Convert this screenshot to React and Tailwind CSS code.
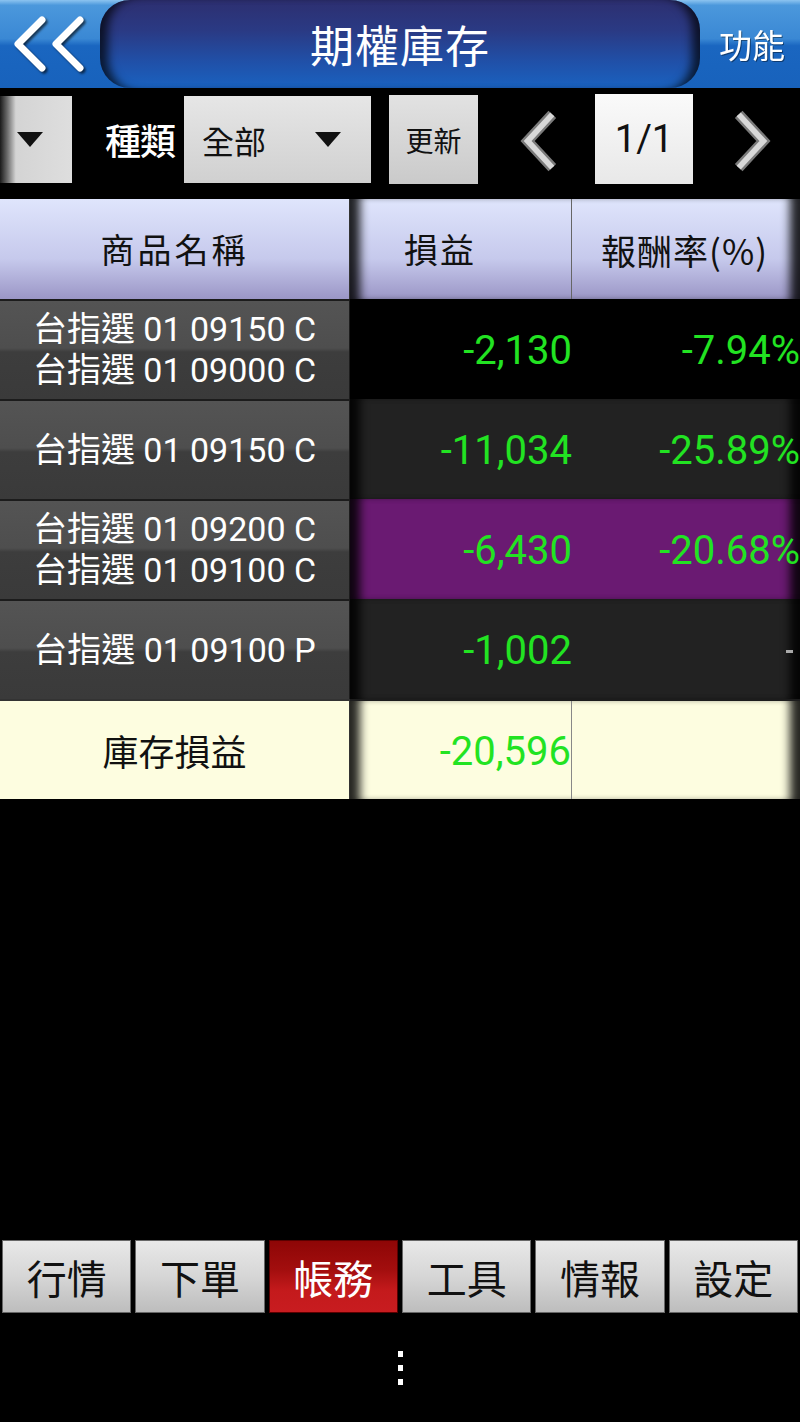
import React from 'react'

const cjk = { fontFamily: '"Noto Sans CJK TC", "Noto Sans CJK SC", sans-serif' }
const num = { fontFamily: 'Roboto, "Noto Sans CJK TC", sans-serif' }

const rows = [
  { names: ['台指選 01 09150 C', '台指選 01 09000 C'], pl: '-2,130', rate: '-7.94%', bg: 'bg-black' },
  { names: ['台指選 01 09150 C'], pl: '-11,034', rate: '-25.89%', bg: 'bg-[#222222]' },
  { names: ['台指選 01 09200 C', '台指選 01 09100 C'], pl: '-6,430', rate: '-20.68%', bg: 'bg-[#6a1a72]' },
  { names: ['台指選 01 09100 P'], pl: '-1,002', rate: '-', bg: 'bg-[#222222]', dash: true },
]

const tabs = ['行情', '下單', '帳務', '工具', '情報', '設定']

const Chevron = ({ dir, className }) => (
  <svg viewBox="0 0 40 64" className={className}>
    <polyline
      points={dir === 'left' ? '34,4 8,32 34,60' : '6,4 32,32 6,60'}
      fill="none"
      stroke="#7a7a7a"
      strokeWidth="11"
      strokeLinejoin="miter"
    />
    <polyline
      points={dir === 'left' ? '34,4 8,32 34,60' : '6,4 32,32 6,60'}
      fill="none"
      stroke="#d8d8d8"
      strokeWidth="6"
      strokeLinejoin="miter"
    />
  </svg>
)

const Caret = () => (
  <svg viewBox="0 0 26 15" className="w-[26px] h-[15px]">
    <polygon points="0,0 26,0 13,15" fill="#111" />
  </svg>
)

const App = () => {
  return (
    <div className="w-[800px] h-[1422px] bg-black flex flex-col overflow-hidden" style={cjk}>
      {/* Title bar */}
      <div className="h-[88px] flex bg-[linear-gradient(#8cc4f0_0%,#4b98dc_6%,#3a88d4_44%,#1a66c0_52%,#1862bc_100%)]">
        <div className="w-[100px] flex items-center pl-[10px]">
          <svg viewBox="0 0 80 60" className="w-[80px] h-[60px] drop-shadow-[2px_2px_1px_rgba(0,0,0,0.6)]">
            <polyline points="32,6 8,30 32,54" fill="none" stroke="#fff" strokeWidth="7" strokeLinecap="round" strokeLinejoin="round" />
            <polyline points="70,6 46,30 70,54" fill="none" stroke="#fff" strokeWidth="7" strokeLinecap="round" strokeLinejoin="round" />
          </svg>
        </div>
        <div className="flex-1 rounded-[30px] flex items-center justify-center bg-[linear-gradient(#2d2f70_0%,#2a3a84_35%,#2050a8_70%,#1a62c0_100%)] shadow-[inset_14px_0_10px_-6px_rgba(0,0,0,0.7),inset_-14px_0_10px_-6px_rgba(0,0,0,0.7)]">
          <span className="text-white text-[44px] leading-none tracking-[1px]">期權庫存</span>
        </div>
        <div className="w-[100px] flex items-center justify-center pl-[4px]">
          <span className="text-white text-[33px] leading-none drop-shadow-[1px_1px_0_rgba(0,0,0,0.4)]">功能</span>
        </div>
      </div>

      {/* Toolbar */}
      <div className="h-[111px] flex items-start pt-[7px]">
        <div className="w-[72px] h-[87px] mt-[1px] flex items-center pl-[17px] bg-[linear-gradient(90deg,#1a1a1a_0%,#6a6a6a_10%,#d4d4d4_22%,#dedede_100%)]">
          <Caret />
        </div>
        <span className="ml-[33px] mt-[26px] text-white text-[36px] font-medium leading-none tracking-[-1px]">種類</span>
        <div className="ml-[9px] w-[187px] h-[87px] mt-[1px] flex items-center justify-between pl-[18px] pr-[30px] bg-[linear-gradient(#e6e6e6,#d0d0d0)]">
          <span className="text-[32px] leading-none text-[#111]">全部</span>
          <Caret />
        </div>
        <div className="ml-[18px] w-[89px] h-[89px] flex items-center justify-center bg-[linear-gradient(#e2e2e2,#cacaca)]">
          <span className="text-[28px] leading-none text-[#111]">更新</span>
        </div>
        <Chevron dir="left" className="ml-[42px] mt-[14px] w-[38px] h-[64px]" />
        <div className="ml-[37px] -mt-[1px] w-[98px] h-[90px] flex items-center justify-center bg-[linear-gradient(#fafafa,#e8e8e8)]">
          <span className="text-[38px] leading-none text-[#111]" style={num}>1/1</span>
        </div>
        <Chevron dir="right" className="ml-[40px] mt-[14px] w-[38px] h-[64px]" />
      </div>

      {/* Table */}
      <div className="flex flex-col">
        {/* Header */}
        <div className="h-[100px] flex">
          <div className="w-[350px] flex items-center justify-center bg-[linear-gradient(#dfe5fc_0%,#c6c9ec_60%,#9b96c6_100%)] border-r border-[#333]">
            <span className="text-[34px] text-[#111] tracking-[3px] leading-none">商品名稱</span>
          </div>
          <div className="flex-1 flex bg-[linear-gradient(#dfe5fc_0%,#c6c9ec_60%,#9b96c6_100%)] shadow-[inset_16px_0_10px_-6px_rgba(0,0,0,0.85),inset_-16px_0_10px_-6px_rgba(0,0,0,0.85)]">
            <div className="w-[222px] flex items-center pl-[54px] border-r border-[#666]">
              <span className="text-[34px] text-[#111] tracking-[2px] leading-none">損益</span>
            </div>
            <div className="flex-1 flex items-center justify-end pr-[32px]">
              <span className="text-[35px] text-[#111] leading-none tracking-[1px]">報酬率(%)</span>
            </div>
          </div>
        </div>

        {rows.map((r, i) => (
          <div key={i} className="h-[100px] flex">
            <div className="w-[350px] flex flex-col items-center justify-center border-t-2 border-r border-[#1c1c1c] bg-[linear-gradient(#545454_0%,#4e4e4e_48%,#3d3d3d_52%,#3a3a3a_100%)]">
              {r.names.map((n) => (
                <span key={n} className="text-white text-[34px] leading-[41px]" style={num}>
                  {n}
                </span>
              ))}
            </div>
            <div className={`flex-1 flex ${r.bg} shadow-[inset_16px_0_10px_-6px_rgba(0,0,0,0.85),inset_-16px_0_10px_-6px_rgba(0,0,0,0.85)]`}>
              <div className="w-[222px] flex items-center justify-end pt-[4px]">
                <span className="text-[#22e322] text-[40px] leading-none" style={num}>{r.pl}</span>
              </div>
              <div className="flex-1 flex items-center justify-end pt-[4px]">
                {r.dash ? (
                  <span className="w-[7px] h-[3px] bg-[#aaa] mr-[7px]" />
                ) : (
                  <span className="text-[#22e322] text-[40px] leading-none" style={num}>{r.rate}</span>
                )}
              </div>
            </div>
          </div>
        ))}

        {/* Summary */}
        <div className="h-[100px] flex">
          <div className="w-[350px] flex items-center justify-center bg-[#fdfde0] border-t-2 border-r border-[#333]">
            <span className="text-[36px] text-[#111] leading-none">庫存損益</span>
          </div>
          <div className="flex-1 flex bg-[#fdfde0] border-t-2 border-[#1c1c1c] shadow-[inset_16px_0_10px_-6px_rgba(0,0,0,0.85),inset_-16px_0_10px_-6px_rgba(0,0,0,0.85)]">
            <div className="w-[222px] flex items-center justify-end border-r border-[#888] pt-[4px]">
              <span className="text-[#22e322] text-[40px] leading-none" style={num}>-20,596</span>
            </div>
            <div className="flex-1" />
          </div>
        </div>
      </div>

      <div className="flex-1" />

      {/* Bottom tabs */}
      <div className="h-[73px] flex gap-[4px] px-[2px]">
        {tabs.map((t) => (
          <div
            key={t}
            className={
              t === '帳務'
                ? 'flex-1 flex items-center justify-center border border-[#5a0000] bg-[linear-gradient(#8e0606_0%,#a20e0e_40%,#c41a1c_70%,#c81c20_100%)]'
                : 'flex-1 flex items-center justify-center border border-[#666] bg-[linear-gradient(#e8e8e8_0%,#d6d6d6_50%,#bdbdbd_100%)]'
            }
          >
            <span className={t === '帳務' ? 'text-white text-[40px] leading-none' : 'text-[#111] text-[40px] leading-none'}>
              {t}
            </span>
          </div>
        ))}
      </div>

      {/* Menu dots */}
      <div className="h-[109px] flex flex-col items-center pt-[38px] gap-[8px]">
        <span className="w-[5px] h-[6px] bg-white" />
        <span className="w-[5px] h-[6px] bg-white" />
        <span className="w-[5px] h-[6px] bg-white" />
      </div>
    </div>
  )
}

export default App
